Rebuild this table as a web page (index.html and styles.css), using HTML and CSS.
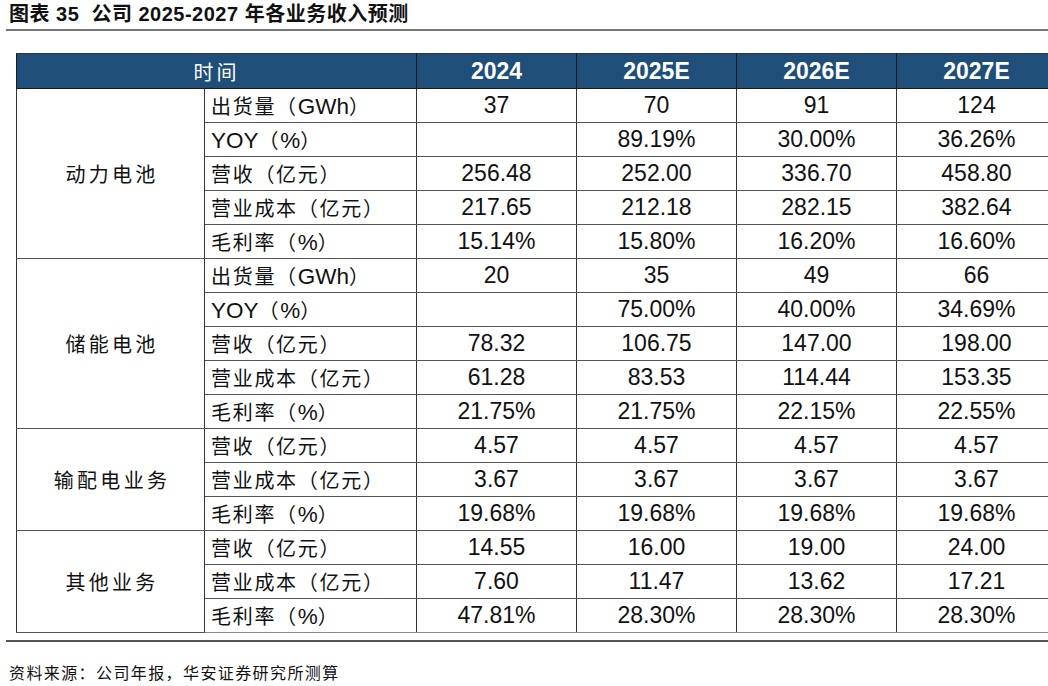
FILE: index.html
```html
<!DOCTYPE html>
<html lang="zh-CN">
<head>
<meta charset="utf-8">
<title>图表 35 公司 2025-2027 年各业务收入预测</title>
<link rel="stylesheet" href="styles.css">
</head>
<body>
<div class="page">
  <h1 class="title">图表 35&nbsp; 公司 2025-2027 年各业务收入预测</h1>
  <div class="table-wrap">
    <table class="data">
      <colgroup>
        <col class="c-group"><col class="c-item"><col class="c-num"><col class="c-num"><col class="c-num"><col class="c-num">
      </colgroup>
      <thead>
        <tr>
          <th colspan="2" class="h-time">时间</th>
          <th>2024</th><th>2025E</th><th>2026E</th><th>2027E</th>
        </tr>
      </thead>
      <tbody class="grp">
        <tr><td rowspan="5" class="group">动力电池</td><td class="item">出货量（<span class="lat">GWh</span>）</td><td>37</td><td>70</td><td>91</td><td>124</td></tr>
        <tr><td class="item"><span class="lat">YOY</span>（<span class="lat">%</span>）</td><td></td><td>89.19%</td><td>30.00%</td><td>36.26%</td></tr>
        <tr><td class="item">营收（亿元）</td><td>256.48</td><td>252.00</td><td>336.70</td><td>458.80</td></tr>
        <tr><td class="item">营业成本（亿元）</td><td>217.65</td><td>212.18</td><td>282.15</td><td>382.64</td></tr>
        <tr><td class="item">毛利率（<span class="lat">%</span>）</td><td>15.14%</td><td>15.80%</td><td>16.20%</td><td>16.60%</td></tr>
      </tbody>
      <tbody class="grp">
        <tr><td rowspan="5" class="group">储能电池</td><td class="item">出货量（<span class="lat">GWh</span>）</td><td>20</td><td>35</td><td>49</td><td>66</td></tr>
        <tr><td class="item"><span class="lat">YOY</span>（<span class="lat">%</span>）</td><td></td><td>75.00%</td><td>40.00%</td><td>34.69%</td></tr>
        <tr><td class="item">营收（亿元）</td><td>78.32</td><td>106.75</td><td>147.00</td><td>198.00</td></tr>
        <tr><td class="item">营业成本（亿元）</td><td>61.28</td><td>83.53</td><td>114.44</td><td>153.35</td></tr>
        <tr><td class="item">毛利率（<span class="lat">%</span>）</td><td>21.75%</td><td>21.75%</td><td>22.15%</td><td>22.55%</td></tr>
      </tbody>
      <tbody class="grp">
        <tr><td rowspan="3" class="group">输配电业务</td><td class="item">营收（亿元）</td><td>4.57</td><td>4.57</td><td>4.57</td><td>4.57</td></tr>
        <tr><td class="item">营业成本（亿元）</td><td>3.67</td><td>3.67</td><td>3.67</td><td>3.67</td></tr>
        <tr><td class="item">毛利率（<span class="lat">%</span>）</td><td>19.68%</td><td>19.68%</td><td>19.68%</td><td>19.68%</td></tr>
      </tbody>
      <tbody class="grp last">
        <tr><td rowspan="3" class="group">其他业务</td><td class="item">营收（亿元）</td><td>14.55</td><td>16.00</td><td>19.00</td><td>24.00</td></tr>
        <tr><td class="item">营业成本（亿元）</td><td>7.60</td><td>11.47</td><td>13.62</td><td>17.21</td></tr>
        <tr><td class="item">毛利率（<span class="lat">%</span>）</td><td>47.81%</td><td>28.30%</td><td>28.30%</td><td>28.30%</td></tr>
      </tbody>
    </table>
  </div>
  <div class="rule"></div>
  <p class="source">资料来源：公司年报，华安证券研究所测算</p>
</div>
</body>
</html>
```

FILE: styles.css
```css
html, body {
  margin: 0;
  padding: 0;
  background: #ffffff;
  overflow: hidden;
}

.page {
  width: 1048px;
  height: 686px;
  overflow: hidden;
  font-family: "Liberation Sans", "Noto Sans CJK SC", sans-serif;
  color: #111;
}

.title {
  margin: 0 0 0 6px;
  padding: 0 0 0 3px;
  height: 29px;
  line-height: 29px;
  font-size: 20px;
  font-weight: bold;
  letter-spacing: 0.5px;
  color: #111;
  border-bottom: 2px solid #777;
  white-space: nowrap;
}

.table-wrap {
  margin: 22px 0 0 16px;
  width: 1040px;
}

.data {
  border-collapse: collapse;
  table-layout: fixed;
  width: 1040px;
}

.c-group { width: 188px; }
.c-item { width: 212px; }
.c-num { width: 160px; }

.data th {
  height: 34px;
  padding: 0;
  background: #1f4e79;
  color: #fff;
  font-size: 23px;
  font-weight: bold;
  text-align: center;
  border: 1px solid #1a1a1a;
  border-top: 1px solid #333;
}

.data th.h-time {
  font-family: "Noto Sans CJK SC", sans-serif;
  font-weight: normal;
  font-size: 20px;
  letter-spacing: 3px;
}

.data td {
  height: 33px;
  padding: 0;
  text-align: center;
  font-size: 23px;
  color: #111;
  border-left: 1px solid #333;
  border-right: 1px solid #333;
  border-top: 1px solid #555;
  border-bottom: 1px solid #555;
  white-space: nowrap;
}

.data td.item {
  text-align: left;
  padding-left: 6px;
  font-family: "Noto Sans CJK SC", sans-serif;
  font-size: 20px;
  letter-spacing: 1.7px;
}

.data td.group {
  font-family: "Noto Sans CJK SC", sans-serif;
  font-size: 20px;
  letter-spacing: 3.3px;
  padding-left: 3px;
}

.lat {
  font-family: "Liberation Sans", sans-serif;
  font-size: 22.5px;
  letter-spacing: 0;
}

.grp.last tr:last-child td {
  border-bottom: 1px solid #888;
}

.rule {
  margin: 7px 0 0 6px;
  height: 2px;
  background: #555;
}

.source {
  margin: 19px 0 0 9px;
  font-family: "Noto Sans CJK SC", sans-serif;
  font-size: 16px;
  letter-spacing: 1.4px;
  line-height: 22px;
  color: #111;
}
```
